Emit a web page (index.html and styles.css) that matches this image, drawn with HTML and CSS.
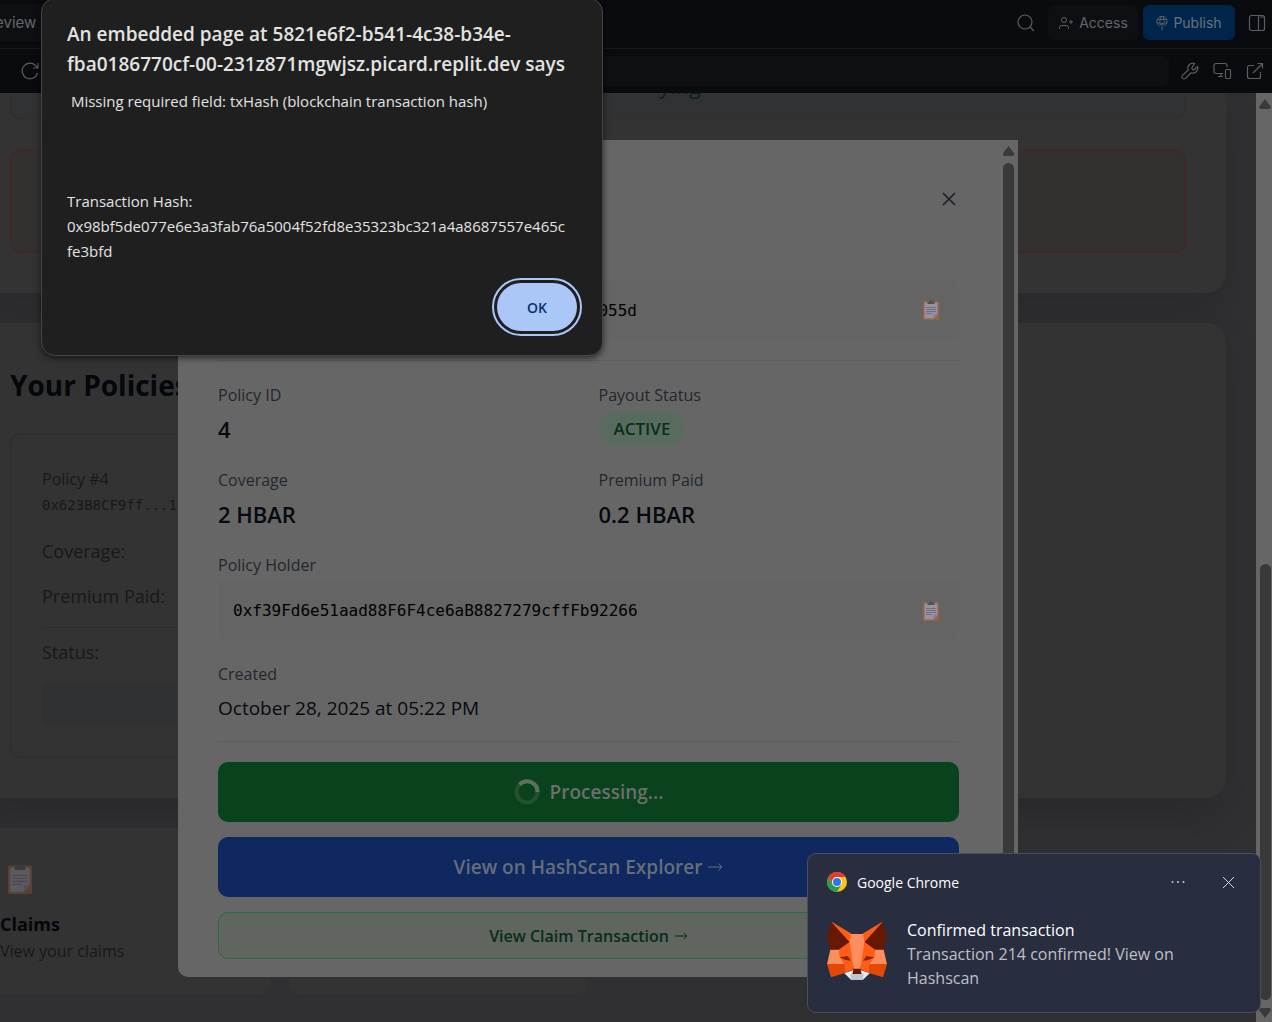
FILE: index.html
```html
<!DOCTYPE html>
<html lang="en">
<head>
<meta charset="utf-8">
<meta name="viewport" content="width=device-width, initial-scale=1">
<title>Your Policies</title>
<link rel="stylesheet" href="styles.css">
</head>
<body>
<svg class="sprite" aria-hidden="true">
  <symbol id="clipboard" viewBox="0 0 16 20">
    <rect x="0" y="1" width="16" height="19" rx="1" fill="#b5642e"/>
    <path d="M1.500 2.500h13V14l-4 4.500h-9z" fill="#b9b0cc"/>
    <path d="M10.500 18.500V14h4z" fill="#9c92b0"/>
    <path d="M3 7.500h10M3 9.500h10M3 11.500h10M3 13.500h6" stroke="#6f6780" stroke-width=".8"/>
    <path d="M4.500 1.500h2a1.500 1.500 0 0 1 3 0h2V4h-7z" fill="#4a444e"/>
  </symbol>
</svg>
<div class="app">
  <header class="topbar">
    <span class="tab">eview</span>
    <div class="actions">
      <button class="icon-btn search" aria-label="Search"><svg width="18" height="18" viewBox="0 0 18 18"><circle cx="8" cy="8" r="7"/><path d="M13 13l4 4"/></svg></button>
      <button class="pill-btn access"><svg width="16" height="14" viewBox="0 0 16 14"><circle cx="6" cy="4" r="2.500"/><path d="M1.500 13v-1.500Q1.500 9.500 3.500 9.500h5q2 0 2 2V13M13 4v4M11 6h4"/></svg>Access</button>
      <button class="pill-btn publish"><svg width="12" height="16" viewBox="0 0 12 16"><path d="M3.500 11A5.200 5.200 0 1 1 8.500 11M1 4.500h10M1 8h2.500M8.500 8H11M6 1C3.500 3 3.500 8 4.500 10M6 1c2.500 2 2.500 7 1.500 9M6 15.500V8M4 10l2-2 2 2"/></svg>Publish</button>
      <button class="icon-btn" aria-label="Toggle panel"><svg width="18" height="18" viewBox="0 0 18 18"><rect x="1.500" y="1.500" width="15" height="15" rx="2"/><path d="M10.500 1.500v15M12 3h4"/></svg></button>
    </div>
  </header>
  <div class="urlbar">
    <button class="icon-btn" aria-label="Reload"><svg width="18" height="18" viewBox="0 0 18 18"><path d="M16.500 11A7.800 7.800 0 1 1 14.500 3.500L17 6M17 1v5h-5"/></svg></button>
    <input class="address" type="text" aria-label="Address">
    <div class="tools">
      <button class="icon-btn" aria-label="Tools"><svg width="18" height="18" viewBox="0 0 18 18"><path d="M11 5.500a1 1 0 0 0 0 1.200l1 1a1 1 0 0 0 1.200 0L16.500 4.500A5 5 0 0 1 10 10.800L4.500 16.400a2 2 0 0 1-3-3L7.200 8A5 5 0 0 1 13.500 1.500z"/></svg></button>
      <button class="icon-btn" aria-label="Devices"><svg width="19" height="18" viewBox="0 0 19 18"><path d="M10 11.500H3a2 2 0 0 1-2-2v-6a2 2 0 0 1 2-2h9a2 2 0 0 1 2 2V5M5 14.500h5M8 11.500v3"/><rect x="12.500" y="7.500" width="5" height="9" rx="1"/></svg></button>
      <button class="icon-btn" aria-label="Open in new tab"><svg width="18" height="18" viewBox="0 0 18 18"><path d="M8 3.500H3.500a2 2 0 0 0-2 2v9a2 2 0 0 0 2 2h9a2 2 0 0 0 2-2V10M11.500 1.500h5v5M16.500 1.500L7 11"/></svg></button>
    </div>
  </div>

  <div class="pane">
    <main class="page">
      <section class="card">
        <div class="info"><span>ying</span></div>
        <div class="alert"></div>
      </section>
      <section class="card">
        <h2>Your Policies</h2>
        <div class="policies">
          <article class="policy">
            <div class="policy-name">Policy #4</div>
            <div class="policy-hash">0x623B8CF9ff...1f</div>
            <div class="policy-row">Coverage:</div>
            <div class="policy-row">Premium Paid:</div>
            <div class="policy-row status">Status:</div>
            <div class="policy-action"></div>
          </article>
        </div>
      </section>
      <div class="links">
        <article class="link-card">
          <svg class="link-icon" width="24" height="30"><use href="#clipboard"/></svg>
          <h3>Claims</h3>
          <p>View your claims</p>
        </article>
        <article class="link-card"></article>
      </div>
    </main>
    <div class="scrollbar page-scroll"><i class="up"></i><i class="thumb"></i><i class="down"></i></div>

    <section class="modal" role="dialog" aria-label="Policy details">
      <div class="modal-body">
        <div class="modal-head"><button class="close" aria-label="Close"><svg width="14" height="14" viewBox="0 0 14 14"><path d="M1 1l12 12M13 1L1 13"/></svg></button></div>
        <div class="code-box"><code class="end">055d</code><button aria-label="Copy"><svg width="16" height="20"><use href="#clipboard"/></svg></button></div>
        <dl class="details">
          <div><dt>Policy ID</dt><dd>4</dd></div>
          <div><dt>Payout Status</dt><dd><span class="badge">ACTIVE</span></dd></div>
          <div><dt>Coverage</dt><dd>2 HBAR</dd></div>
          <div><dt>Premium Paid</dt><dd>0.2 HBAR</dd></div>
          <div class="wide"><dt>Policy Holder</dt><dd class="code-box"><code>0xf39Fd6e51aad88F6F4ce6aB8827279cffFb92266</code><button aria-label="Copy"><svg width="16" height="20"><use href="#clipboard"/></svg></button></dd></div>
          <div class="wide"><dt>Created</dt><dd class="date">October 28, 2025 at 05:22 PM</dd></div>
        </dl>
        <div class="modal-actions">
          <button class="btn green"><svg class="spinner" width="26" height="26" viewBox="0 0 26 26"><circle cx="13" cy="13" r="10.500" stroke="#22522f"/><path d="M5.500 5.500A10.500 10.500 0 0 1 23.500 13" stroke="#60705f"/></svg>Processing...</button>
          <a class="btn blue" href="#">View on HashScan Explorer <svg class="arrow" width="15" height="10" viewBox="0 0 15 10"><path d="M0 5h14M10.500 1.500L14 5l-3.500 3.500"/></svg></a>
          <a class="btn outline" href="#">View Claim Transaction <svg class="arrow" width="13" height="8" viewBox="0 0 13 8"><path d="M0 4h12M9 1l3 3-3 3"/></svg></a>
        </div>
      </div>
      <div class="scrollbar modal-scroll"><i class="up"></i><i class="thumb"></i></div>
    </section>
  </div>

  <section class="dialog" role="alertdialog" aria-labelledby="dialog-title">
    <h1 id="dialog-title">An embedded page at 5821e6f2-b541-4c38-b34e-fba0186770cf-00-231z871mgwjsz.picard.replit.dev says</h1>
    <p class="message">&nbsp;Missing required field: txHash (blockchain transaction hash)</p>
    <p>Transaction Hash:<br>0x98bf5de077e6e3a3fab76a5004f52fd8e35323bc321a4a8687557e465c<wbr>fe3bfd</p>
    <button class="ok">OK</button>
  </section>

  <aside class="toast">
    <div class="toast-head">
      <svg width="20" height="20" viewBox="0 0 20 20"><circle cx="10" cy="10" r="10" fill="#fcc31e"/><path d="M5.670 12.500L1.340 5A10 10 0 0 1 18.660 5H10z" fill="#e33b2e"/><path d="M5.670 12.500L1.340 5A10 10 0 0 0 10 20L14.330 12.500z" fill="#2b9c4a"/><circle cx="10" cy="10" r="5" fill="#fff"/><circle cx="10" cy="10" r="4" fill="#2a78ea"/></svg>
      <span class="toast-app">Google Chrome</span>
      <button aria-label="More"><svg width="14" height="4" viewBox="0 0 14 4"><g fill="#c9cad0"><circle cx="1.500" cy="2" r="1"/><circle cx="7" cy="2" r="1"/><circle cx="12.500" cy="2" r="1"/></g></svg></button>
      <button aria-label="Dismiss"><svg width="13" height="13" viewBox="0 0 13 13"><path d="M1 1l11 11M12 1L1 12" stroke="#d5d6da" fill="none"/></svg></button>
    </div>
    <div class="toast-body">
      <svg width="60" height="58" viewBox="0 0 180 174">
        <path d="M14 0L74 36h32L166 0l-26 90-10 40H50L36 84z" fill="#ff5c16"/>
        <path d="M14 0L0 46l10 37h26l32-23z" fill="#661800"/>
        <path d="M166 0l14 46-10 37h-26l-32-23z" fill="#661800"/>
        <path d="M14 0L74 36 68 60zM166 0l-60 36 6 24z" fill="#ff5c16"/>
        <path d="M10 83h26l16 44H0zM170 83h-26l-16 44h52z" fill="#ff8d5d"/>
        <path d="M0 126h52v28l-40 12zM180 126h-52v28l40 12z" fill="#e34807"/>
        <path d="M36 83l32-23 12 82-28 12v-28l-14-20zM144 83l-32-23-12 82 28 12v-28l14-20z" fill="#ff5c16"/>
        <path d="M72 36h36l4 24-12 82H80L68 60z" fill="#ff8d5d"/>
        <path d="M52 154l28-10h20l28 10-20 19H72z" fill="#e7ebf6"/>
        <path d="M70 156h40l-2 17H72z" fill="#c0c4cd"/>
        <path d="M80 140h20l4 16H76z" fill="#661800"/>
        <path d="M38 106l24-4 10 14-16-2zM142 106l-24-4-10 14 16-2z" fill="#8a2706"/>
      </svg>
      <div><strong>Confirmed transaction</strong><p>Transaction 214 confirmed! View on Hashscan</p></div>
    </div>
  </aside>
</div>
</body>
</html>
```
FILE: styles.css
```css
* { box-sizing: border-box; }
body { margin: 0; background: #090b0f; font-family: "Open Sans", "Noto Sans", sans-serif; }
h1, h2, h3, p, dl, dd { margin: 0; }
button { padding: 0; border: 0; background: none; color: inherit; font: inherit; }
a { text-decoration: none; }
svg { display: block; flex: none; }
.sprite { position: absolute; width: 0; height: 0; }

.app { position: relative; display: flex; flex-direction: column; height: 100vh; overflow: hidden; }

/* Workspace bars */
.topbar { display: flex; align-items: center; justify-content: space-between; height: 49px; padding: 0 6px 3px 0; border-bottom: 1px solid #17191d; font: 14px Inter, sans-serif; color: #64666a; }
.tab { margin-left: -5px; padding: 9px 12px 9px 0; font-size: 15px; background: #0d0f13; }
.actions { display: flex; align-items: center; gap: 5px; }
.icon-btn svg, .pill-btn svg { fill: none; stroke: #5c5e62; stroke-width: 1.2; }
.search { margin-right: 8px; }
.pill-btn { display: flex; align-items: center; justify-content: center; gap: 5px; height: 35px; border-radius: 6px; }
.pill-btn svg { stroke-width: 1; }
.access { width: 90px; background: #0d0f13; }
.publish { width: 92px; margin-right: 8px; background: #00254b; color: #66727e; }
.urlbar { display: flex; align-items: center; gap: 12px; height: 44px; flex: none; padding: 0 8px 0 21px; }
.address { flex: 1; height: 30px; border: 0; border-radius: 6px; background: #0e1014; }
.tools { display: flex; gap: 14px; }

/* Page behind the modal */
.pane { position: relative; display: flex; flex: 1; min-height: 0; overflow: hidden; background: #303033; }
.page { flex: 1; display: flex; flex-direction: column; gap: 30px; margin: 0 30px 0 -30px; }
.card { flex: none; padding: 40px; border-radius: 20px; background: #333; box-shadow: 0 20px 40px rgba(0, 0, 0, .14); }
.card:first-child { padding-top: 0; border-radius: 0 0 20px 20px; }
.info { display: flex; align-items: flex-start; height: 26px; padding-left: 648px; border: 1px solid #292f35; border-top: 0; border-radius: 0 0 10px 10px; background: #303234; color: #0c2417; font-size: 22px; line-height: 28px; }
.info span { margin-top: -22px; }
.alert { height: 104px; margin-top: 30px; border: 2px solid #422729; border-radius: 10px; background: #33312f; }
h2 { margin-bottom: 26px; color: #04070c; font-size: 28px; line-height: 44px; font-weight: 700; }
.policies { display: grid; grid-template-columns: 1fr 1fr; gap: 20px; }
.policy { padding: 30px; border: 2px solid #2e2f30; border-radius: 10px; color: #16191c; font-size: 18px; line-height: 28px; }
.policy-name { font-size: 16px; }
.policy-hash { margin-bottom: 20px; font: 14px/24px "DejaVu Sans Mono", monospace; }
.policy-row { margin-bottom: 17px; }
.policy .status { margin-bottom: 16px; padding-top: 10px; border-top: 1px solid #2b2c2d; }
.policy-action { height: 44px; border-radius: 10px; background: #2f3133; }
.links { display: grid; grid-template-columns: repeat(4, 1fr); gap: 20px; }
.link-card { height: 166px; padding: 30px; border-radius: 10px; background: #333; color: #16191c; font-size: 16px; line-height: 26px; }
.link-icon { margin: 6px 0 16px 8px; opacity: .3; }
h3 { color: #04070c; font-size: 18px; line-height: 28px; font-weight: 700; }

/* Scrollbars */
.scrollbar { display: flex; flex-direction: column; align-items: center; }
.scrollbar .up, .scrollbar .down { width: 12px; height: 10px; background: #3a3a3a; clip-path: polygon(50% 0, 100% 80%, 90% 100%, 10% 100%, 0 80%); }
.scrollbar .down { transform: scaleY(-1); }
.scrollbar .thumb { width: 11px; border-radius: 6px; background: #393939; }
.page-scroll { width: 16px; padding: 6px 0 4px 2px; background: #666; }
.page-scroll .thumb { height: 436px; margin: auto 0 8px; }

/* Policy details modal */
.modal { position: absolute; top: 47px; left: 178px; right: 254px; display: flex; border-radius: 0 0 10px 10px; background: #666; }
.modal-body { flex: 1; padding: 40px 44px 18px 40px; }
.modal-head { display: flex; justify-content: flex-end; align-items: flex-start; height: 100px; padding: 12px 3px 0 0; }
.close svg { stroke: #1a2128; stroke-width: 1.7; }
.modal-scroll { width: 15px; padding: 6px 4px 0 0; }
.modal-scroll .thumb { flex: 1; margin-top: 7px; }
.code-box { display: flex; align-items: center; justify-content: space-between; height: 60px; padding: 0 20px 0 15px; border-radius: 6px; background: #646464; }
.code-box svg { opacity: .6; }
code { color: #000; font: 16px "DejaVu Sans Mono", monospace; }
.end { width: 404px; text-align: right; }
.details { display: grid; grid-template-columns: 1fr 1fr; gap: 21px 20px; margin-top: 20px; padding: 21px 0 16px; border: 1px solid #5c5d5f; border-width: 1px 0; }
.wide { grid-column: 1 / -1; }
dt { margin-bottom: 3px; color: #23272d; font-size: 16px; line-height: 26px; }
dd { display: flex; align-items: center; height: 35px; color: #060910; font-size: 22px; font-weight: 600; }
dd.code-box { height: 59px; }
dd.date { font-size: 19px; font-weight: 400; }
.badge { padding: 0 15px; border-radius: 18px; background: #586b5e; color: #08301a; font-size: 17px; line-height: 35px; }
.modal-actions { display: grid; gap: 15px; margin-top: 20px; }
.btn { display: flex; align-items: center; justify-content: center; gap: 6px; height: 60px; border-radius: 10px; color: #6a706b; font-size: 19px; font-weight: 600; }
.btn svg { fill: none; stroke: currentColor; }
.green { gap: 10px; background: #0a421e; }
.green .spinner { stroke-width: 4; }
.blue { background: #0f2860; color: #676d7b; }
.outline { height: 47px; border: 1px solid #2d6b45; background: #60655f; color: #082d19; font-size: 16px; }

/* Browser alert */
.dialog { position: absolute; top: -2px; left: 41px; width: 562px; padding: 20px 20px 20px 25px; border: 1px solid #454545; border-radius: 14px; background: #1f1f1f; box-shadow: 0 2px 6px rgba(0, 0, 0, .6); color: #e3e3e3; font-size: 15px; line-height: 25px; }
.dialog h1 { margin-bottom: 10px; font-size: 19px; line-height: 30px; font-weight: 600; }
.message { margin-bottom: 75px; }
.ok { display: block; width: 80px; height: 48px; margin: 19px 5px 4px auto; border-radius: 24px; background: #aac7f8; color: #0a2f6f; font-size: 14px; font-weight: 600; outline: 2px solid #aac7f8; outline-offset: 3px; }

/* Desktop notification */
.toast { position: absolute; right: 11px; bottom: 9px; width: 454px; height: 160px; padding: 18px 25px 18px 19px; border: 1px solid #4a4d5b; border-radius: 9px; background: #292d40; color: #fff; font-size: 14px; }
.toast-head { display: flex; align-items: center; height: 20px; }
.toast-app { flex: 1; padding-left: 10px; }
.toast-head button + button { margin-left: 37px; }
.toast-body { display: flex; gap: 20px; margin-top: 26px; font-size: 16px; line-height: 24px; }
.toast-body > svg { margin-top: 4px; }
.toast-body strong { font-weight: 400; }
.toast-body p { max-width: 290px; color: #bfc0c6; }
```
